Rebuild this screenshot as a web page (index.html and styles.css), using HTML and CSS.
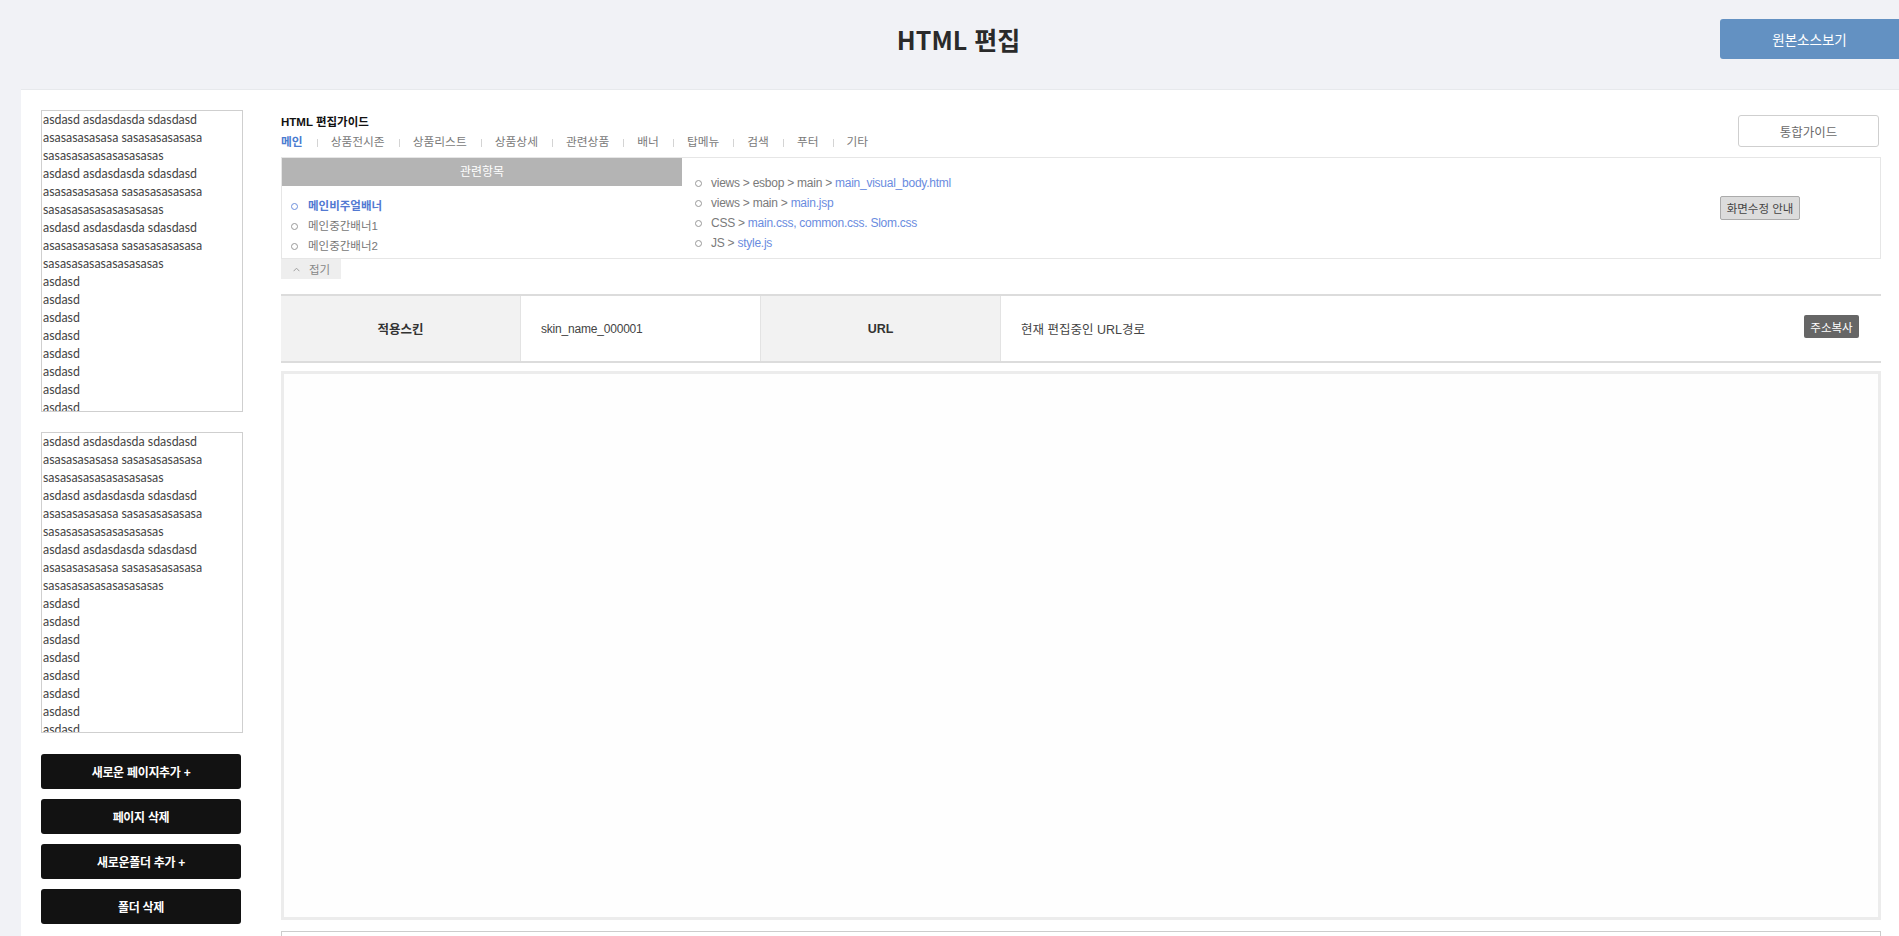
FILE: index.html
```html
<!DOCTYPE html>
<html lang="ko">
<head>
<meta charset="utf-8">
<title>HTML 편집</title>
<link rel="stylesheet" href="styles.css">
</head>
<body>
<header class="top">
  <h1 class="title">HTML 편집</h1>
  <button class="btn-source" type="button">원본소스보기</button>
</header>
<main class="panel">
  <aside class="side">
    <div class="tree">
      <div class="ln">asdasd asdasdasda sdasdasd</div>
      <div class="ln">asasasasasasa sasasasasasasa</div>
      <div class="ln">sasasasasasasasasasas</div>
      <div class="ln">asdasd asdasdasda sdasdasd</div>
      <div class="ln">asasasasasasa sasasasasasasa</div>
      <div class="ln">sasasasasasasasasasas</div>
      <div class="ln">asdasd asdasdasda sdasdasd</div>
      <div class="ln">asasasasasasa sasasasasasasa</div>
      <div class="ln">sasasasasasasasasasas</div>
      <div class="ln">asdasd</div>
      <div class="ln">asdasd</div>
      <div class="ln">asdasd</div>
      <div class="ln">asdasd</div>
      <div class="ln">asdasd</div>
      <div class="ln">asdasd</div>
      <div class="ln">asdasd</div>
      <div class="ln">asdasd</div>
      <div class="ln">asdasd</div>
    </div>
    <div class="tree tree-2">
      <div class="ln">asdasd asdasdasda sdasdasd</div>
      <div class="ln">asasasasasasa sasasasasasasa</div>
      <div class="ln">sasasasasasasasasasas</div>
      <div class="ln">asdasd asdasdasda sdasdasd</div>
      <div class="ln">asasasasasasa sasasasasasasa</div>
      <div class="ln">sasasasasasasasasasas</div>
      <div class="ln">asdasd asdasdasda sdasdasd</div>
      <div class="ln">asasasasasasa sasasasasasasa</div>
      <div class="ln">sasasasasasasasasasas</div>
      <div class="ln">asdasd</div>
      <div class="ln">asdasd</div>
      <div class="ln">asdasd</div>
      <div class="ln">asdasd</div>
      <div class="ln">asdasd</div>
      <div class="ln">asdasd</div>
      <div class="ln">asdasd</div>
      <div class="ln">asdasd</div>
      <div class="ln">asdasd</div>
    </div>
    <div class="side-btns">
      <button class="btn-dark" type="button">새로운 페이지추가 +</button>
      <button class="btn-dark" type="button">페이지 삭제</button>
      <button class="btn-dark" type="button">새로운폴더 추가 +</button>
      <button class="btn-dark" type="button">폴더 삭제</button>
    </div>
  </aside>

  <section class="content">
    <div class="guide-head">
      <div class="guide-left">
        <h2 class="guide-title">HTML 편집가이드</h2>
        <ul class="tabs">
          <li class="on">메인</li>
          <li>상품전시존</li>
          <li>상품리스트</li>
          <li>상품상세</li>
          <li>관련상품</li>
          <li>배너</li>
          <li>탑메뉴</li>
          <li>검색</li>
          <li>푸터</li>
          <li>기타</li>
        </ul>
      </div>
      <button class="btn-guide" type="button">통합가이드</button>
    </div>

    <div class="info">
      <div class="info-left">
        <div class="info-hd">관련항목</div>
        <ul class="rel">
          <li class="on">메인비주얼배너</li>
          <li>메인중간배너1</li>
          <li>메인중간배너2</li>
        </ul>
      </div>
      <ul class="paths">
        <li>views &gt; esbop &gt; main &gt; <span class="lk">main_visual_body.html</span></li>
        <li>views &gt; main &gt; <span class="lk">main.jsp</span></li>
        <li>CSS &gt; <span class="lk">main.css, common.css. Slom.css</span></li>
        <li>JS &gt; <span class="lk">style.js</span></li>
      </ul>
      <button class="btn-notice" type="button">화면수정 안내</button>
    </div>
    <button class="fold" type="button">
      <svg width="7" height="5" viewBox="0 0 7 5" aria-hidden="true"><path d="M0.6 4.2 L3.5 1.2 L6.4 4.2" fill="none" stroke="#a0a0a0" stroke-width="1"/></svg>
      <span>접기</span>
    </button>

    <div class="meta">
      <div class="th">적용스킨</div>
      <div class="td skin">skin_name_000001</div>
      <div class="th">URL</div>
      <div class="td grow">
        <span>현재 편집중인 URL경로</span>
        <button class="btn-copy" type="button">주소복사</button>
      </div>
    </div>

    <div class="editor"></div>
    <div class="editor-2"></div>
  </section>
</main>
</body>
</html>
```

FILE: styles.css
```css
* {
  box-sizing: border-box;
}

html,
body {
  margin: 0;
  overflow: hidden;
}

body {
  background: #f1f2f6;
  font-family: "Liberation Sans", "Noto Sans CJK KR", sans-serif;
  color: #333;
}

button {
  font-family: inherit;
  cursor: pointer;
}

ul {
  list-style: none;
  margin: 0;
  padding: 0;
}

/* header */
.top {
  height: 89px;
  display: grid;
  grid-template-columns: 1fr auto 1fr;
  padding-left: 18px;
}

.title {
  grid-column: 2;
  margin: 0;
  padding-top: 22px;
  font-family: "Noto Sans CJK KR", sans-serif;
  font-size: 25px;
  line-height: 34px;
  font-weight: 700;
  color: #2a2a2a;
}

.btn-source {
  grid-column: 3;
  justify-self: end;
  align-self: start;
  margin-top: 19px;
  width: 179px;
  height: 40px;
  border: 0;
  border-radius: 3px 0 0 3px;
  background: #6391c2;
  color: #fff;
  font-size: 13.5px;
  padding: 0;
}

/* panel */
.panel {
  margin-left: 21px;
  background: #fff;
  border-top: 1px solid #e7e9ec;
  padding: 20px 18px 0 20px;
  display: flex;
  gap: 38px;
  height: 860px;
}

.side {
  width: 202px;
  flex: none;
}

.tree {
  height: 302px;
  border: 1px solid #cfcfcf;
  overflow: hidden;
  padding: 0 1px;
  font-family: Lato, "Liberation Sans", sans-serif;
  font-size: 12.4px;
  line-height: 18px;
  color: #444;
}

.tree-2 {
  margin-top: 20px;
  height: 301px;
}

.ln {
  white-space: nowrap;
}

.side-btns {
  margin-top: 21px;
  display: flex;
  flex-direction: column;
  gap: 10px;
  width: 200px;
}

.btn-dark {
  height: 35px;
  border: 0;
  border-radius: 3px;
  background: #121212;
  color: #fff;
  font-size: 12px;
  font-weight: 700;
  letter-spacing: -0.3px;
  padding: 0;
}

/* content */
.content {
  width: 1600px;
  flex: none;
  padding-top: 4px;
}

.guide-head {
  display: flex;
  justify-content: space-between;
  align-items: flex-start;
  height: 36px;
}

.guide-title {
  margin: 0;
  font-size: 11.5px;
  line-height: 16px;
  font-weight: 700;
  color: #111;
}

.tabs {
  display: flex;
  margin-top: 4px;
  font-size: 11.75px;
  line-height: 16px;
  color: #7a7a7a;
}

.tabs li + li::before {
  content: "";
  display: inline-block;
  width: 1px;
  height: 8px;
  background: #d4d4d4;
  margin: 0 13px 0 14px;
  vertical-align: -1px;
}

.tabs li.on {
  color: #4a7bd0;
  font-weight: 700;
}

.btn-guide {
  margin-top: 1px;
  margin-right: 2px;
  width: 141px;
  height: 32px;
  border: 1px solid #cfcfcf;
  border-radius: 3px;
  background: #fff;
  color: #6a6a6a;
  font-size: 12.5px;
  padding: 0;
}

/* info box */
.info {
  margin-top: 7px;
  display: flex;
  border: 1px solid #e6e6e6;
}

.info-left {
  width: 400px;
  flex: none;
}

.info-hd {
  height: 28px;
  background: #b4b4b4;
  color: #fff;
  font-size: 12px;
  line-height: 28px;
  text-align: center;
}

.rel {
  padding: 10px 0 2px 9px;
  font-size: 11.5px;
  line-height: 20px;
  color: #777;
}

.rel li {
  display: flex;
  align-items: center;
}

.rel li::before,
.paths li::before {
  content: "";
  width: 5px;
  height: 5px;
  border: 1px solid #999;
  border-radius: 50%;
  margin-right: 10px;
  flex: none;
}

.rel li.on {
  color: #5279d2;
  font-weight: 700;
}

.rel li.on::before {
  border-color: #6d8fdb;
}

.paths {
  flex: 1;
  padding: 15px 0 0 13px;
  font-size: 12px;
  line-height: 20px;
  color: #7a7a7a;
  letter-spacing: -0.25px;
}

.paths li {
  display: flex;
  align-items: center;
  white-space: pre;
}

.paths li::before {
  margin-right: 9px;
}

.lk {
  color: #6a8ce0;
}

.btn-notice {
  align-self: center;
  margin-right: 80px;
  width: 80px;
  height: 24px;
  border: 1px solid #ababab;
  border-radius: 2px;
  background: #dcdcdc;
  color: #444;
  font-size: 11.5px;
  padding: 0;
}

.fold {
  display: flex;
  align-items: center;
  gap: 9px;
  width: 60px;
  height: 20px;
  border: 0;
  background: #eee;
  color: #888;
  font-size: 11.5px;
  padding: 0 0 0 12px;
}

/* meta row */
.meta {
  display: flex;
  margin-top: 15px;
  height: 69px;
  border-top: 2px solid #dcdcdc;
  border-bottom: 2px solid #dcdcdc;
  font-size: 12.5px;
}

.th {
  width: 240px;
  flex: none;
  background: #f2f2f2;
  display: flex;
  align-items: center;
  justify-content: center;
  font-weight: 700;
  color: #333;
  border-right: 1px solid #e3e3e3;
}

.td {
  width: 240px;
  flex: none;
  display: flex;
  align-items: center;
  padding-left: 20px;
  color: #444;
  border-right: 1px solid #e3e3e3;
}

.td.skin {
  font-size: 12px;
  letter-spacing: -0.2px;
}

.td.grow {
  flex: 1;
  width: auto;
  border-right: 0;
  justify-content: space-between;
  padding-right: 22px;
}

.btn-copy {
  width: 55px;
  height: 23px;
  border: 0;
  border-radius: 2px;
  background: #666;
  color: #fff;
  font-size: 11.5px;
  padding: 0;
  margin-top: -4px;
}

.editor {
  margin-top: 8px;
  height: 549px;
  border: 3px solid #ececec;
  background: #fefefe;
}

.editor-2 {
  margin-top: 11px;
  height: 60px;
  border: 1px solid #cccccc;
}
```
